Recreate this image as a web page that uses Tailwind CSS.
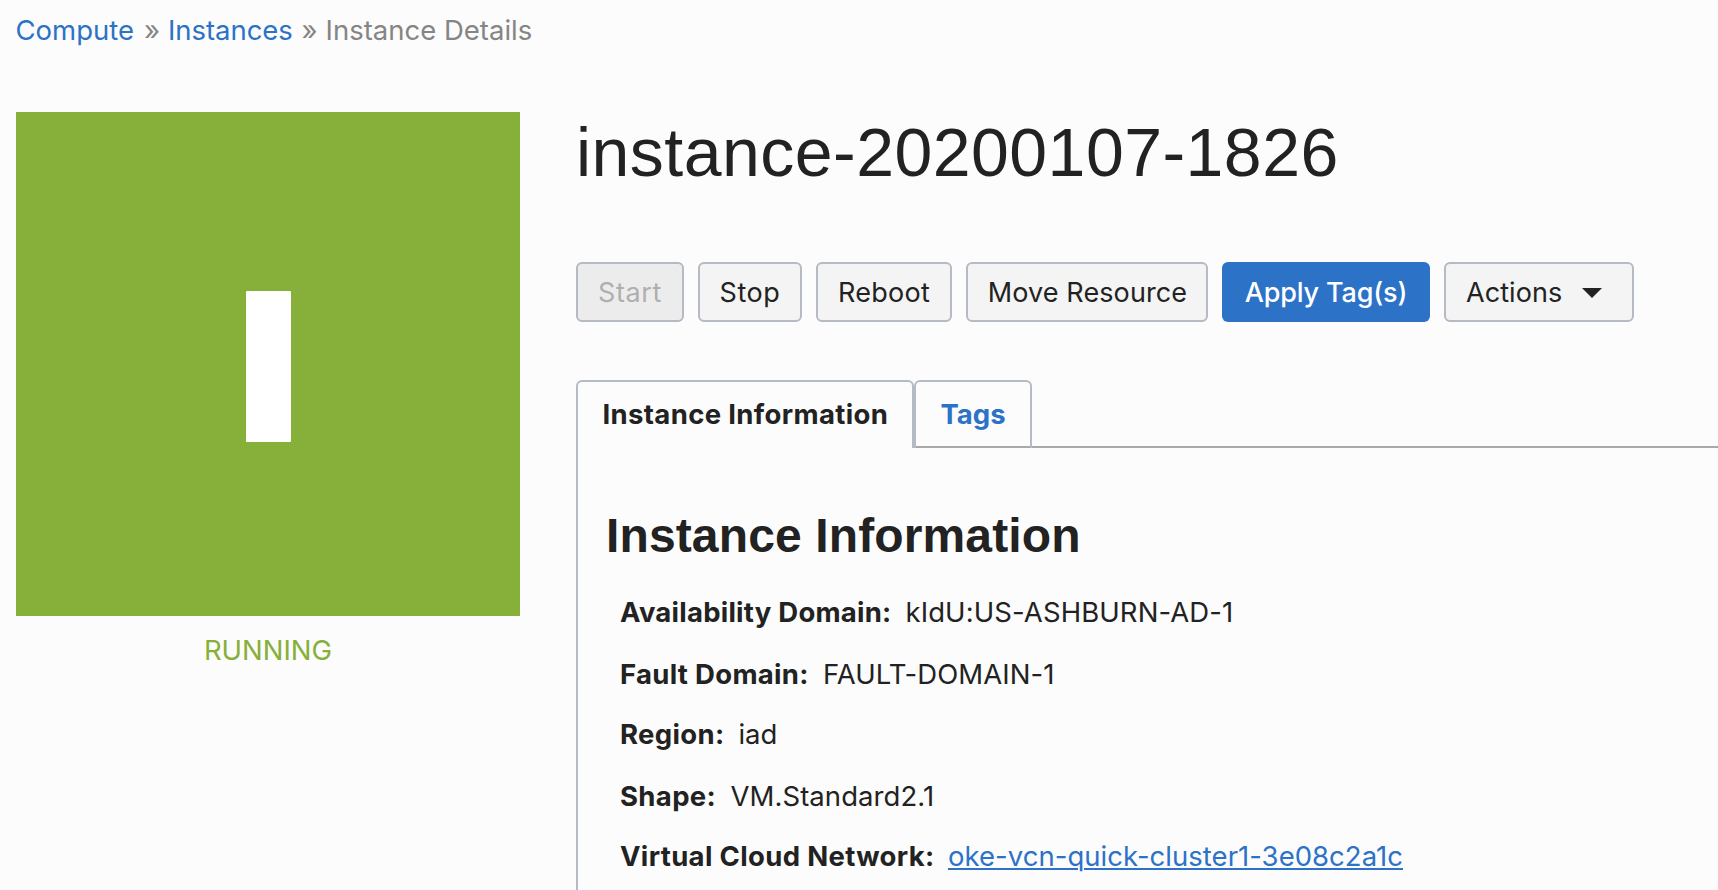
<!DOCTYPE html>
<html lang="en">
<head>
<meta charset="utf-8">
<title>Instance Details</title>
<script src="https://cdn.jsdelivr.net/npm/@tailwindcss/browser@4"></script>
</head>
<body class="h-[890px] w-[1718px] overflow-hidden bg-[#fcfcfc] font-['Inter','Liberation_Sans',sans-serif] text-[27.5px] text-[#222]">
<nav class="flex h-[60px] items-center pl-[15.5px] leading-[60px] whitespace-nowrap text-[#858585]">
  <a class="w-[128.5px] text-[#2c72c7]">Compute</a>
  <span class="w-[24px]">»</span>
  <a class="w-[133.5px] tracking-[-0.05px] text-[#2c72c7]">Instances</a>
  <span class="w-[24px]">»</span>
  <span>Instance Details</span>
</nav>
<div class="mt-[52px] flex">
  <aside class="ml-4 w-[504px] shrink-0">
    <div class="flex h-[504px] items-center justify-center bg-[#86b03a]">
      <div class="mt-[5px] h-[151px] w-[45px] rounded-[1px] bg-white"></div>
    </div>
    <p class="mt-4 text-center leading-9 text-[#86b03a]">RUNNING</p>
  </aside>
  <main class="ml-14 flex min-w-0 grow flex-col">
    <h1 class="h-20 font-['Liberation_Sans',sans-serif] text-[68px] leading-[80px] tracking-[0.47px] whitespace-nowrap">instance-20200107-1826</h1>
    <div class="mt-[70px] flex gap-[14px] text-[27px] leading-[54px] whitespace-nowrap">
      <button class="h-[60px] w-[108px] rounded-md border-2 border-[#b5bbc3] bg-[#ececec] pt-[2px] tracking-[0.6px] text-[#afafaf]">Start</button>
      <button class="h-[60px] w-[104px] rounded-md border-2 border-[#b5bbc3] bg-[#f4f4f4] pt-[2px] tracking-[0.6px]">Stop</button>
      <button class="h-[60px] w-[136px] rounded-md border-2 border-[#b5bbc3] bg-[#f4f4f4] pt-[2px] tracking-[0.27px]">Reboot</button>
      <button class="h-[60px] w-[242px] rounded-md border-2 border-[#b5bbc3] bg-[#f4f4f4] pt-[2px] pl-px tracking-[0.1px]">Move Resource</button>
      <button class="h-[60px] w-[208px] rounded-md bg-[#2c72c7] pt-[2px] font-medium tracking-[-0.15px] text-white">Apply Tag(s)</button>
      <button class="flex h-[60px] w-[190px] items-center rounded-md border-2 border-[#b5bbc3] bg-[#f4f4f4] pt-[2px] pl-5 tracking-[0.07px]">Actions
        <svg class="ml-5 h-[10px] w-5" viewBox="0 0 20 10"><path d="M0 0h20L10 10z" fill="#222"/></svg>
      </button>
    </div>
    <div class="mt-[58px] flex h-[68px] leading-[64px] font-bold whitespace-nowrap">
      <div class="w-[338px] rounded-t-md border-x-2 border-t-2 border-[#b5bbc3] pl-[24.5px] tracking-[0.35px]">Instance Information</div>
      <div class="w-[118px] rounded-t-md border-x-2 border-t-2 border-[#b5bbc3] text-[#2c72c7]">
        <div class="h-full border-b-2 border-[#a9a9a9] pl-[24.5px]">Tags</div>
      </div>
      <div class="grow border-b-2 border-[#a9a9a9]"></div>
    </div>
    <section class="h-[442px] border-l-2 border-[#b5bbc3] pt-[61px] pl-7 whitespace-nowrap">
      <h2 class="font-['Liberation_Sans',sans-serif] text-5xl leading-[54px] font-bold tracking-[0.13px]">Instance Information</h2>
      <dl class="mt-[19px] pl-[14px] leading-[60px]">
        <div class="mb-[2px] flex"><dt class="w-[285.5px] font-bold tracking-[0.24px]">Availability Domain:</dt><dd class="tracking-[0.1px]">kIdU:US-ASHBURN-AD-1</dd></div>
        <div class="flex"><dt class="w-[203px] font-bold tracking-[0.31px]">Fault Domain:</dt><dd class="tracking-[0.06px]">FAULT-DOMAIN-1</dd></div>
        <div class="mb-[2px] flex"><dt class="w-[118.5px] font-bold tracking-[0.33px]">Region:</dt><dd class="tracking-[-0.1px]">iad</dd></div>
        <div class="flex"><dt class="w-[110.5px] font-bold tracking-[0.35px]">Shape:</dt><dd class="tracking-[0.07px]">VM.Standard2.1</dd></div>
        <div class="flex"><dt class="w-[328px] font-bold tracking-[0.34px]">Virtual Cloud Network:</dt><dd><a class="tracking-[0.03px] text-[#2c72c7] underline decoration-2 underline-offset-[2px]">oke-vcn-quick-cluster1-3e08c2a1c</a></dd></div>
      </dl>
    </section>
  </main>
</div>
</body>
</html>
